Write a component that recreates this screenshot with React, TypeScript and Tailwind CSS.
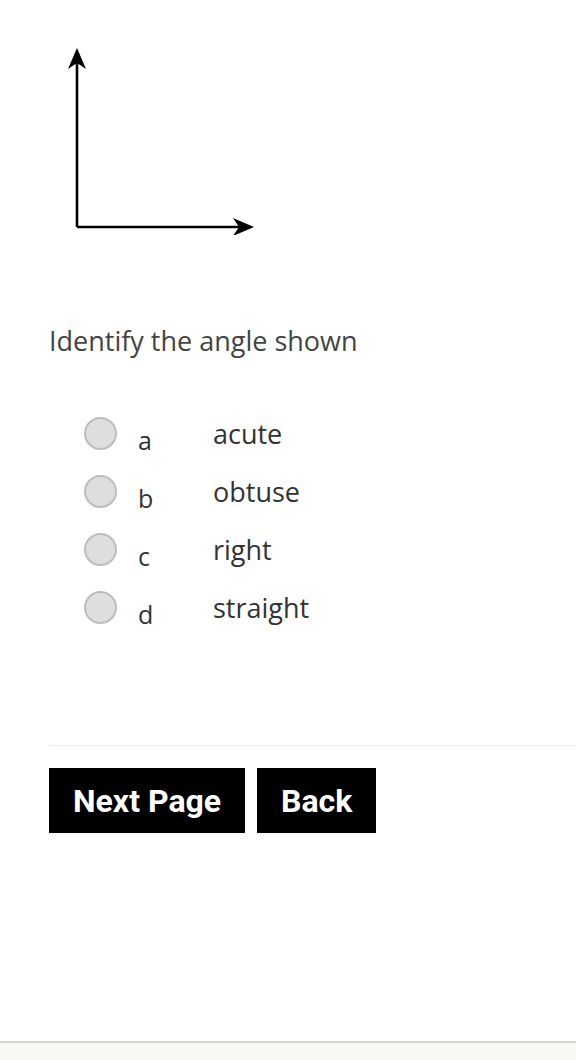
import React from "react";

const options = [
  { key: "a", label: "acute" },
  { key: "b", label: "obtuse" },
  { key: "c", label: "right" },
  { key: "d", label: "straight" },
];

const AngleFigure: React.FC = () => (
  <svg width="220" height="190" viewBox="0 0 220 190" className="block">
    <path d="M28 182 V14 M28 182 H198" stroke="#000" strokeWidth="2.6" fill="none" />
    <path d="M28 3 L19 24 L28 18 L37 24 Z" fill="#000" />
    <path d="M205 182 L184 173 L190 182 L184 191 Z" fill="#000" />
  </svg>
);

const App: React.FC = () => {
  return (
    <div className="min-h-[1060px] flex flex-col bg-white font-['Open_Sans',sans-serif]">
      <div className="flex-1 pl-[49px]">
        <div className="pt-[45px]">
          <AngleFigure />
        </div>

        <p className="mt-[90px] text-[27px] leading-[32px] text-[#444]">Identify the angle shown</p>

        {/* choices */}
        <div className="mt-[60px] flex flex-col gap-[25px] pl-[35px]">
          {options.map((o) => (
            <div key={o.key} className="flex items-center h-[33px]">
              <span className="w-[33px] h-[33px] rounded-full bg-[#dedede] border-2 border-[#bdbdbd] shrink-0" />
              <span className="ml-[21px] w-[75px] pt-[15px] text-[25px] text-[#333]">{o.key}</span>
              <span className="text-[27px] text-[#333] mt-[1px]">{o.label}</span>
            </div>
          ))}
        </div>

        <div className="mt-[121px] border-t border-[#ebebeb]" />

        <div className="mt-[22px] flex gap-[12px] font-['Roboto',sans-serif]">
          <button className="h-[65px] px-[24px] bg-black text-white text-[32px] font-bold">Next Page</button>
          <button className="h-[65px] px-[24px] bg-black text-white text-[32px] font-bold">Back</button>
        </div>
      </div>

      <div className="h-[19px] border-t-2 border-[#d3d7cf] bg-[#f8f8f4]" />
    </div>
  );
};

export default App;
